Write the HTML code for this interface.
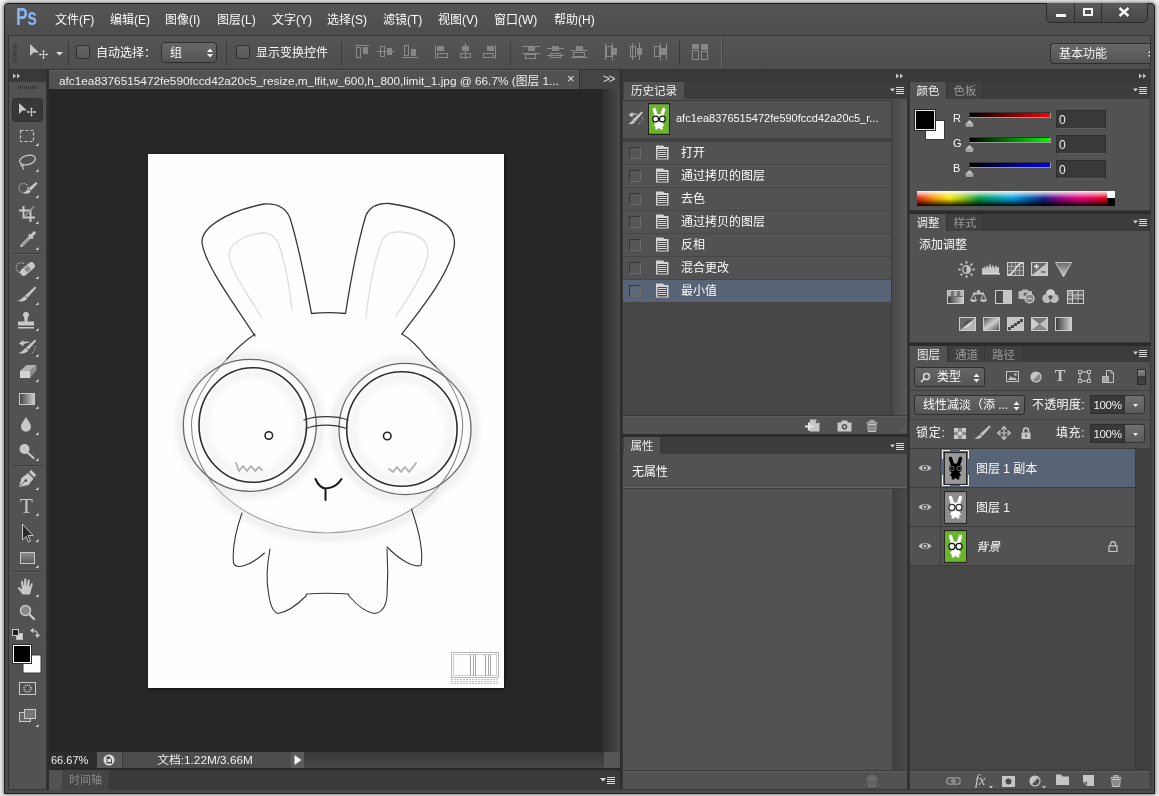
<!DOCTYPE html>
<html lang="zh-CN"><head><meta charset="utf-8"><title>Photoshop</title>
<style>
*{box-sizing:border-box;margin:0;padding:0}
html,body{width:1159px;height:796px;overflow:hidden}
body{background:#f6f6f6;font-family:"Liberation Sans","Noto Sans CJK SC",sans-serif;font-size:12px;color:#f0f0f0;position:relative}
.abs{position:absolute}
#win{position:absolute;left:4px;top:3px;width:1151px;height:791px;box-shadow:0 0 4px 1px rgba(0,0,0,.5);background:#4a4a4a;border:1px solid #1e1e1e;border-radius:4px 4px 0 0}
#app{position:absolute;left:0;top:0;width:1159px;height:796px;will-change:transform;opacity:.999}
#menubar{position:absolute;left:5px;top:4px;width:1149px;height:31px;background:linear-gradient(#565656,#4e4e4e);border-radius:4px 4px 0 0}
.menu{position:absolute;top:11px;font-size:12px;color:#fbfbfb;white-space:nowrap;line-height:16px}
#optbar{overflow:hidden;position:absolute;left:8px;top:35px;width:1143px;height:35px;background:linear-gradient(#565656,#4f4f4f);border:1px solid #343434;border-top-color:#3a3a3a}
.t12{font-size:12px;line-height:16px;white-space:nowrap;color:#fbfbfb}
#tools{position:absolute;left:8px;top:70px;width:39px;height:720px;background:#535353;border:1px solid #343434;border-top:none}
.darkhead{background:#3a3a3a}
#doc{position:absolute;left:49px;top:70px;width:571px;height:720px;overflow:hidden;background:#282828}
#tabbar{position:absolute;left:0;top:0;width:571px;height:19px;background:#454545}
#tab{position:absolute;left:0;top:0;width:531px;height:19px;box-shadow:inset 0 1px 0 #636363;background:#535353;border-right:1px solid #333}
#mid{position:absolute;left:622px;top:70px;width:286px;height:720px;overflow:hidden;background:#535353}
#right{position:absolute;left:909px;top:70px;width:242px;height:720px;overflow:hidden;background:#535353}
.ptabs{position:absolute;left:0;width:100%;height:17px;background:#3d3d3d}
.ptab{position:absolute;top:0;height:17px;background:#535353;color:#f0f0f0;font-size:11.5px;line-height:19px !important;text-align:center;overflow:hidden;white-space:nowrap}
.ptab.off{background:#414141;color:#9a9a9a}
</style></head><body>
<div id="win"></div>
<div id="app">
<div class="abs" style="left:8px;top:69px;width:1143px;height:721px;background:#2e2e2e"></div><div class="abs" style="left:622px;top:70px;width:529px;height:12px;background:#3a3a3a"></div>
<div id="menubar">
<div class="abs" id="pslogo" style="left:11px;top:3px;font-size:23px;font-weight:bold;color:#8fb5e6;line-height:26px;letter-spacing:-0.5px;transform:scaleX(.76);transform-origin:0 0;top:0px;text-shadow:0 0 1px #2d5c9e">Ps</div>
<div class="menu" style="left:50px;top:8px">文件(F)</div>
<div class="menu" style="left:105px;top:8px">编辑(E)</div>
<div class="menu" style="left:160px;top:8px">图像(I)</div>
<div class="menu" style="left:212px;top:8px">图层(L)</div>
<div class="menu" style="left:267px;top:8px">文字(Y)</div>
<div class="menu" style="left:322px;top:8px">选择(S)</div>
<div class="menu" style="left:378px;top:8px">滤镜(T)</div>
<div class="menu" style="left:433px;top:8px">视图(V)</div>
<div class="menu" style="left:489px;top:8px">窗口(W)</div>
<div class="menu" style="left:549px;top:8px">帮助(H)</div>
<div class="abs" id="winbtns" style="left:1041px;top:-1px;width:102px;height:20px;background:linear-gradient(#5a5a5a,#484848);border:1px solid #2c2c2c;border-top:none;border-radius:0 0 5px 5px">
<div class="abs" style="left:27px;top:0;width:1px;height:19px;background:#2e2e2e"></div>
<div class="abs" style="left:54px;top:0;width:1px;height:19px;background:#2e2e2e"></div>
<div class="abs" style="left:9px;top:11px;width:10px;height:3px;background:#f4f4f4"></div>
<div class="abs" style="left:36px;top:5px;width:10px;height:8px;border:2px solid #f4f4f4"></div>
<svg class="abs" style="left:71px;top:4px" width="12" height="10" viewBox="0 0 12 10"><path d="M1.5 1 L10.5 9 M10.5 1 L1.5 9" stroke="#f4f4f4" stroke-width="2.4" fill="none"/></svg>
</div>
</div>
<div id="optbar"><div class="abs" style="left:0;top:1px;width:1142px;height:31px">
<svg class="abs" style="left:0px;top:0px" width="1142" height="31" viewBox="0 0 1142 31"><rect x="4" y="6" width="4" height="1" fill="#3c3c3c"/><rect x="4" y="8" width="4" height="1" fill="#3c3c3c"/><rect x="4" y="10" width="4" height="1" fill="#3c3c3c"/><rect x="4" y="12" width="4" height="1" fill="#3c3c3c"/><rect x="4" y="14" width="4" height="1" fill="#3c3c3c"/><rect x="4" y="16" width="4" height="1" fill="#3c3c3c"/><rect x="4" y="18" width="4" height="1" fill="#3c3c3c"/><rect x="4" y="20" width="4" height="1" fill="#3c3c3c"/><rect x="4" y="22" width="4" height="1" fill="#3c3c3c"/><rect x="4" y="24" width="4" height="1" fill="#3c3c3c"/><path d="M21 7 L21 19 L24.5 15.5 L30 15.5 Z" fill="#c8c8c8"/><path d="M34.5 13.500 v8 M30.500 17.500 h8" stroke="#c8c8c8" stroke-width="1" fill="none"/><path d="M33 14.700 l1.500 -2 l1.500 2 Z M33 20.300 l1.500 2 l1.500 -2 Z M31.700 16 l-2 1.500 l2 1.500 Z M37.300 16 l2 1.500 l-2 1.500 Z" fill="#c8c8c8"/><path d="M47 15 h7 l-3.5 3.5 Z" fill="#e0e0e0"/><rect x="59" y="4" width="1" height="24" fill="#3c3c3c"/><rect x="217" y="4" width="1" height="24" fill="#3c3c3c"/><rect x="332" y="4" width="1" height="24" fill="#3c3c3c"/><rect x="501" y="4" width="1" height="24" fill="#3c3c3c"/><rect x="670" y="4" width="1" height="24" fill="#3c3c3c"/><rect x="712" y="0" width="1" height="31" fill="#6a6a6a"/><rect x="713" y="0" width="1" height="31" fill="#444"/><rect x="346" y="8" width="14" height="1" fill="#8c8c8c"/><rect x="347.5" y="10.5" width="4" height="10" fill="none" stroke="#8c8c8c"/><rect x="354" y="10" width="5" height="7" fill="#878787"/><rect x="368" y="14" width="17" height="1" fill="#8c8c8c"/><rect x="371.5" y="9.5" width="4" height="10" fill="none" stroke="#8c8c8c"/><rect x="378" y="11" width="5" height="7" fill="#878787"/><rect x="393" y="20" width="16" height="1" fill="#8c8c8c"/><rect x="395.5" y="8.5" width="4" height="10" fill="none" stroke="#8c8c8c"/><rect x="402" y="12" width="5" height="7" fill="#878787"/><rect x="426" y="8" width="1" height="14" fill="#8c8c8c"/><rect x="428" y="9" width="7" height="5" fill="#878787"/><rect x="428.5" y="16.5" width="10" height="4" fill="none" stroke="#8c8c8c"/><rect x="456" y="6" width="1" height="16" fill="#8c8c8c"/><rect x="453" y="9" width="7" height="5" fill="#878787"/><rect x="451.5" y="16.5" width="10" height="4" fill="none" stroke="#8c8c8c"/><rect x="486" y="8" width="1" height="14" fill="#8c8c8c"/><rect x="478" y="9" width="7" height="5" fill="#878787"/><rect x="474.5" y="16.5" width="10" height="4" fill="none" stroke="#8c8c8c"/><rect x="513" y="9" width="18" height="1" fill="#8c8c8c"/><rect x="519" y="10" width="7" height="4" fill="#878787"/><rect x="513" y="16" width="18" height="1" fill="#8c8c8c"/><rect x="516.5" y="17.5" width="10" height="4" fill="none" stroke="#8c8c8c"/><rect x="538" y="11" width="17" height="1" fill="#8c8c8c"/><rect x="543" y="9" width="7" height="5" fill="#878787"/><rect x="538" y="18" width="17" height="1" fill="#8c8c8c"/><rect x="541.5" y="16.5" width="10" height="4" fill="none" stroke="#8c8c8c"/><rect x="567" y="9" width="7" height="4" fill="#878787"/><rect x="562" y="13" width="17" height="1" fill="#8c8c8c"/><rect x="564.5" y="15.5" width="11" height="4" fill="none" stroke="#8c8c8c"/><rect x="562" y="20" width="17" height="1" fill="#8c8c8c"/><rect x="596" y="6" width="1" height="17" fill="#8c8c8c"/><rect x="597.5" y="9.5" width="5" height="10" fill="none" stroke="#8c8c8c"/><rect x="603" y="6" width="1" height="17" fill="#8c8c8c"/><rect x="604" y="11" width="4" height="7" fill="#878787"/><rect x="621.5" y="9.5" width="5" height="10" fill="none" stroke="#8c8c8c"/><rect x="623" y="6" width="1" height="17" fill="#8c8c8c"/><rect x="628" y="11" width="5" height="7" fill="#878787"/><rect x="630" y="6" width="1" height="17" fill="#8c8c8c"/><rect x="645.5" y="9.5" width="5" height="10" fill="none" stroke="#8c8c8c"/><rect x="651" y="6" width="1" height="17" fill="#8c8c8c"/><rect x="652" y="11" width="5" height="7" fill="#878787"/><rect x="657" y="6" width="1" height="17" fill="#8c8c8c"/><rect x="683" y="7" width="7" height="5" fill="#878787"/><rect x="683.5" y="13.5" width="6" height="9" fill="none" stroke="#8c8c8c"/><rect x="692" y="7" width="7" height="6" fill="#878787"/><rect x="692.5" y="14.5" width="6" height="8" fill="none" stroke="#8c8c8c"/></svg>
<div class="abs" style="left:67px;top:8px;width:14px;height:14px;border:1px solid #2f2f2f;border-radius:3px;background:linear-gradient(#656565,#5a5a5a)"></div>
<div class="abs" style="left:227px;top:8px;width:14px;height:14px;border:1px solid #2f2f2f;border-radius:3px;background:linear-gradient(#656565,#5a5a5a)"></div>
<div class="abs t12" style="left:87px;top:8px">自动选择：</div>
<div class="abs" style="left:152px;top:5px;width:56px;height:21px;border:1px solid #2f2f2f;border-radius:4px;background:linear-gradient(#696969,#555)"><div class="abs t12" style="left:8px;top:2px">组</div><svg class="abs" style="left:44px;top:5px" width="8" height="10" viewBox="0 0 8 10"><path d="M1 4 L4 0.5 L7 4 Z M1 6 L4 9.5 L7 6 Z" fill="#f0f0f0"/></svg></div>
<div class="abs t12" style="left:247px;top:8px">显示变换控件</div>
<div class="abs" style="left:1041px;top:6px;width:102px;height:21px;border:1px solid #2f2f2f;border-right:none;border-radius:4px 0 0 4px;background:linear-gradient(#696969,#555)"><div class="abs" style="left:8px;top:1px;font-size:12px;line-height:18px;color:#f4f4f4">基本功能</div><svg class="abs" style="left:96px;top:5px" width="8" height="10" viewBox="0 0 8 10"><path d="M1 4 L4 0.5 L7 4 Z M1 6 L4 9.5 L7 6 Z" fill="#f0f0f0"/></svg></div>
</div></div>
<div id="tools"><div class="abs darkhead" style="left:0;top:0;width:37px;height:12px"></div><!--TOOLS--><svg class="abs" style="left:0;top:0" width="37" height="721" viewBox="0 0 37 721"><path d="M4 3.5 l3.2 2.5 l-3.2 2.5 Z M8 3.5 l3.2 2.5 l-3.2 2.5 Z" fill="#c4c4c4"/><rect x="9" y="16" width="1" height="3" fill="#333"/><rect x="11" y="16" width="1" height="3" fill="#333"/><rect x="13" y="16" width="1" height="3" fill="#333"/><rect x="15" y="16" width="1" height="3" fill="#333"/><rect x="17" y="16" width="1" height="3" fill="#333"/><rect x="19" y="16" width="1" height="3" fill="#333"/><rect x="21" y="16" width="1" height="3" fill="#333"/><rect x="23" y="16" width="1" height="3" fill="#333"/><rect x="25" y="16" width="1" height="3" fill="#333"/><rect x="27" y="16" width="1" height="3" fill="#333"/><rect x="3.5" y="28.5" width="30" height="23" rx="3" fill="#383838" stroke="#303030"/><path d="M10 33 V44 L13.5 40.5 H18 Z" fill="#c9c9c9"/><path d="M22.5 38 v8 M18.5 42 h8" stroke="#c9c9c9" stroke-width="1" fill="none"/><path d="M21 39.2 l1.5 -2 l1.5 2 Z M21 44.8 l1.5 2 l1.5 -2 Z M19.7 40.5 l-2 1.5 l2 1.5 Z M25.299999999999997 40.5 l2 1.5 l-2 1.5 Z" fill="#c9c9c9"/><rect x="11.5" y="60.5" width="13" height="11" fill="none" stroke="#c9c9c9" stroke-width="1.2" stroke-dasharray="3 2"/><path d="M29.5 73 V76 H26.5 Z" fill="#d8d8d8"/><ellipse cx="18.5" cy="90" rx="8" ry="4.6" transform="rotate(-14 18.5 90)" fill="none" stroke="#c9c9c9" stroke-width="1.3"/><path d="M12.5 94 c-1.5 1 0 3 1.5 2 c1 -1 -0.5 -2 -1.5 -2 M13.5 96 l1 3.5" fill="none" stroke="#c9c9c9" stroke-width="1.1"/><path d="M29.5 99 V102 H26.5 Z" fill="#d8d8d8"/><circle cx="14.5" cy="118" r="4.5" fill="none" stroke="#c9c9c9" stroke-width="1.2" stroke-dasharray="1.2 1.4"/><path d="M27 112 l1.5 1.5 l-6.5 7 l-2.5 -2 Z" fill="#c9c9c9"/><path d="M19 119 l2.8 2.5 c-2 2.3 -5 2.8 -8 1.5 c2.5 -0.5 3.5 -2 5.2 -4 Z" fill="#c9c9c9"/><path d="M29.5 125 V128 H26.5 Z" fill="#d8d8d8"/><path d="M14.5 136 V147.5 H26 M10 140.5 H21.5 V152" fill="none" stroke="#c9c9c9" stroke-width="2"/><path d="M16 146 L25.5 136" stroke="#9a9a9a" stroke-width="1.2"/><path d="M29.5 151 V154 H26.5 Z" fill="#d8d8d8"/><path d="M24.5 161.5 c1.5 -1 3 0.8 2 2.2 l-3 3 l1 1 l-1.5 1.5 l-1 -1 l-7.5 7.5 l-2.5 1.5 l-1 -1 l1.5 -2.5 l7.5 -7.5 l-1 -1 l1.5 -1.5 l1 1 Z" fill="#c9c9c9"/><path d="M20 168.5 l-6.5 6.5" stroke="#555" stroke-width="1"/><path d="M29.5 177 V180 H26.5 Z" fill="#d8d8d8"/><rect x="3" y="183" width="31" height="1" fill="#3e3e3e"/><rect x="3" y="184" width="31" height="1" fill="#5e5e5e"/><path d="M15 193.5 a5 5 0 1 0 -4 9" fill="none" stroke="#c9c9c9" stroke-width="1.2" stroke-dasharray="1.2 1.4"/><rect x="10" y="195.5" width="17" height="7" rx="3.5" transform="rotate(-40 18.5 199)" fill="#c9c9c9"/><rect x="16" y="196.5" width="5" height="5" transform="rotate(-40 18.5 199)" fill="#8e8e8e"/><path d="M29.5 206 V209 H26.5 Z" fill="#d8d8d8"/><path d="M26 216.5 l1.3 1.2 l-8.8 10 l-2.5 -2 Z" fill="#c9c9c9"/><path d="M15.5 226 l2.8 2.5 c-2 3 -6 3.5 -10 2.5 c3 -0.8 4.5 -2.5 7.2 -5 Z" fill="#c9c9c9"/><path d="M29.5 232 V235 H26.5 Z" fill="#d8d8d8"/><path d="M15 247 a2.9 2.9 0 1 1 4 0 l-0.700 4.500 h6.700 v4 h-16 v-4 h6.700 Z" fill="#c9c9c9"/><rect x="9" y="257" width="16" height="1.500" fill="#c9c9c9"/><path d="M29.5 258 V261 H26.5 Z" fill="#d8d8d8"/><path d="M26 269.5 l1.3 1.2 l-7.8 9 l-2.5 -2 Z" fill="#c9c9c9"/><path d="M16.5 278 l2.8 2.5 c-2 3 -6 3.5 -10 2.5 c3 -0.8 4.5 -2.5 7.2 -5 Z" fill="#c9c9c9"/><path d="M10 273.5 l4.5 -3.5 v2 c3 -0.8 5.5 -0.5 7 0.5 c-2.5 0 -5 0.5 -7 1.8 v2 Z" fill="#c9c9c9"/><path d="M26 276 c0.5 3 -1 6 -4.5 8" fill="none" stroke="#c9c9c9" stroke-width="1" stroke-dasharray="1 1.3"/><path d="M29.5 284 V287 H26.5 Z" fill="#d8d8d8"/><path d="M17.5 295 h10 l-6.500 6 h-10 Z" fill="#b4b4b4"/><path d="M27.5 295 v5.500 l-6.500 7.500 v-7 Z" fill="#8f8f8f"/><rect x="11" y="301" width="10" height="7" fill="#d4d4d4"/><path d="M29.5 309 V312 H26.5 Z" fill="#d8d8d8"/><defs><linearGradient id="tg" x1="0" x2="1"><stop offset="0" stop-color="#444"/><stop offset="1" stop-color="#cfcfcf"/></linearGradient><linearGradient id="rg" y1="0" y2="1" x1="0" x2="0"><stop offset="0" stop-color="#8d8d8d"/><stop offset="1" stop-color="#5c5c5c"/></linearGradient></defs><rect x="10.5" y="323.5" width="15" height="11" fill="url(#tg)" stroke="#c9c9c9" stroke-width="1"/><path d="M29.5 336 V339 H26.5 Z" fill="#d8d8d8"/><path d="M17 347 c1.5 3 5 6.5 5 9.8 a5 5 0 0 1 -10 0 c0 -3.3 3.5 -6.800 5 -9.8 Z" fill="#c9c9c9"/><path d="M29.5 362 V365 H26.5 Z" fill="#d8d8d8"/><circle cx="15.5" cy="379" r="5" fill="#c9c9c9"/><path d="M18.5 382.5 l6 5.500" stroke="#c9c9c9" stroke-width="2.2" stroke-linecap="round"/><path d="M29.5 388 V391 H26.5 Z" fill="#d8d8d8"/><rect x="3" y="395" width="31" height="1" fill="#3e3e3e"/><rect x="3" y="396" width="31" height="1" fill="#5e5e5e"/><path d="M10 417 l2.500 -9 l6.500 -5 l5.500 5.500 l-5 6.500 Z" fill="#c9c9c9"/><path d="M20 402 l2.2 -2 l5 5 l-2 2.200 Z" fill="#c9c9c9"/><circle cx="16.8" cy="410.5" r="1.200" fill="#333"/><path d="M10.5 416.5 l5.500 -5.500" stroke="#555" stroke-width="0.8"/><path d="M29.5 417 V420 H26.5 Z" fill="#d8d8d8"/><text x="17.5" y="443" font-family="Liberation Serif,serif" font-size="21" fill="#c9c9c9" text-anchor="middle">T</text><path d="M29.5 443 V446 H26.5 Z" fill="#d8d8d8"/><path d="M13.5 454 V470 L17 466.5 L19.5 472 L21.5 471 L19 465.5 H24 Z" fill="#2a2a2a" stroke="#c9c9c9" stroke-width="1"/><path d="M29.5 469 V472 H26.5 Z" fill="#d8d8d8"/><rect x="11.5" y="482.5" width="14" height="11" fill="url(#rg)" stroke="#c9c9c9" stroke-width="1"/><path d="M29.5 495 V498 H26.5 Z" fill="#d8d8d8"/><rect x="3" y="501" width="31" height="1" fill="#3e3e3e"/><rect x="3" y="502" width="31" height="1" fill="#5e5e5e"/><path d="M13.5 524.5 c-1.500 -2.500 -3.500 -5 -5 -6.500 c0.800 -1.200 2.200 -0.800 3.500 0.800 l1 1 l-1 -8 c0.300 -1.300 1.800 -1.300 2 0 l1 5 l0.200 -7.500 c0.300 -1.300 1.900 -1.300 2.100 0 l0.200 7.500 l1.300 -6.500 c0.400 -1.200 1.900 -1 2 0.300 l-0.800 7.200 l2 -4 c0.700 -1 2 -0.500 1.700 0.700 c-1 3.500 -2 6.500 -2.700 10 Z" fill="#c9c9c9"/><path d="M29.5 524 V527 H26.5 Z" fill="#d8d8d8"/><circle cx="16.5" cy="540.5" r="5" fill="#8a8a8a" stroke="#c9c9c9" stroke-width="1.500"/><path d="M20.5 544.5 l4.500 4.500" stroke="#c9c9c9" stroke-width="2.400" stroke-linecap="round"/><rect x="7.5" y="563.5" width="6" height="6" fill="#d8d8d8" stroke="#bbb"/><rect x="3.5" y="559.5" width="6" height="6" fill="#222" stroke="#ccc"/><path d="M24 560.5 c3 0 4.500 1.500 4.500 4.500" fill="none" stroke="#c9c9c9" stroke-width="1.200"/><path d="M21 560.5 l3.500 -2.800 v5.600 Z M28.5 568 l-2.800 -3.500 h5.600 Z" fill="#c9c9c9"/><rect x="14" y="585" width="18" height="18" fill="#fff" stroke="#3a3a3a" stroke-width="1"/><rect x="3.5" y="574.5" width="19" height="19" fill="#000" stroke="#2c2c2c" stroke-width="1"/><rect x="4.5" y="575.5" width="17" height="17" fill="#000" stroke="#fff" stroke-width="1"/><rect x="10.5" y="612.5" width="16" height="12" fill="none" stroke="#c9c9c9" stroke-width="1"/><circle cx="18.5" cy="618.5" r="3.500" fill="none" stroke="#f0f0f0" stroke-width="1.200" stroke-dasharray="1.100 1.100"/><rect x="10.5" y="642.5" width="11" height="9" fill="#6a6a6a" stroke="#c9c9c9" stroke-width="1"/><rect x="15.5" y="639.5" width="11" height="9" fill="#777" stroke="#c9c9c9" stroke-width="1"/><path d="M29.5 654 V657 H26.5 Z" fill="#d8d8d8"/></svg><!--/TOOLS--></div>
<div id="doc"><div id="tabbar"><div id="tab"><div class="abs" id="tabtxt" style="left:10px;top:3px;font-size:11.8px;line-height:16px;color:#f0f0f0;white-space:nowrap">afc1ea8376515472fe590fccd42a20c5_resize,m_lfit,w_600,h_800,limit_1.jpg @ 66.7% (图层 1...</div><div class="abs" style="left:518px;top:1px;font-size:13px;line-height:16px;color:#e8e8e8">×</div></div>
<div class="abs" style="left:554px;top:1px;font-size:12px;line-height:16px;color:#dcdcdc;letter-spacing:-1.5px">&gt;&gt;</div></div>
<div class="abs" id="canvas" style="left:99px;top:84px;width:356px;height:534px;background:#fff;box-shadow:1px 1px 3px rgba(0,0,0,.5)"><!--RABBIT--><svg class="abs" style="left:0;top:0" width="356" height="534" viewBox="0 0 356 534"><defs><filter id="bl" x="-20%" y="-20%" width="140%" height="140%"><feGaussianBlur stdDeviation="3.500"/></filter></defs><g transform="translate(-148,-154)" fill="none" stroke="#d2d2d2" stroke-width="5" opacity=".55" filter="url(#bl)"><ellipse cx="249.800" cy="425.300" rx="70" ry="69"/><ellipse cx="405" cy="429" rx="70" ry="69"/><path d="M216 492 A135.500 107 0 0 0 438 492"/><ellipse cx="252.800" cy="425" rx="48" ry="51" stroke-width="3"/><ellipse cx="401.900" cy="429" rx="49" ry="51" stroke-width="3"/></g><g transform="translate(-148,-154)" fill="none" stroke-linecap="round" stroke-linejoin="round"><path d="M255 336 C235 305 205 265 202 243 C201 228 225 212 264 204 C278 203 286 208 290 218 C300 250 306 285 311.500 313.500 C322 312.500 335 312.500 345.500 313.500 C350 285 357 245 366 215 C371 205 380 203 389 203.500 C415 207 435 215 447 225 C455 233 456 242 453 252 C445 280 420 310 402 334" stroke="#3a3a3a" stroke-width="1.300"/><path d="M262 318 C245 290 230 270 229 255 C229 243 245 235 262 233 C272 232.500 277 238 280 248 C286 268 290 290 292 310" stroke="#dedede" stroke-width="1.300"/><path d="M366 318 C368 295 374 262 381 243 C385 233 392 231 402 232 C418 234 428 240 428 252 C427 270 410 295 396 316" stroke="#dedede" stroke-width="1.300"/><path d="M255 334 C245 341 235 350 226.500 359.500" stroke="#3a3a3a" stroke-width="1.200"/><path d="M402 334 C411 339 420 349 426 357 C430 361 433 364 436.500 367.500" stroke="#3a3a3a" stroke-width="1.200"/><path d="M226.500 359.500 C220 367 214 373 211 377 C198 395 191 410 191.500 426 C192 450 202 472 216.600 488" stroke="#8a8a8a" stroke-width="1.100"/><path d="M436.500 367.500 C441 372 444 375 446 378 C457 394 463 410 462.700 426 C462 450 452 472 437.400 488" stroke="#8a8a8a" stroke-width="1.100"/><path d="M216.600 488 A135.500 107 0 0 0 437.400 488" stroke="#a4a4a4" stroke-width="1.100"/><ellipse cx="249.800" cy="425.300" rx="66.500" ry="66" stroke="#6a6a6a" stroke-width="1.300"/><ellipse cx="405" cy="429" rx="66" ry="65.600" stroke="#6a6a6a" stroke-width="1.300"/><ellipse cx="252.800" cy="425" rx="53.800" ry="57.300" stroke="#2e2e2e" stroke-width="1.600"/><ellipse cx="401.900" cy="429" rx="55.200" ry="57.300" stroke="#2e2e2e" stroke-width="1.600"/><path d="M304 420 C316 415.500 336 415.500 348 420 M306 428.500 C318 424 334 424 346.500 428.500" stroke="#3a3a3a" stroke-width="1.300"/><circle cx="268.800" cy="435.500" r="3.800" stroke="#222" stroke-width="1.500"/><circle cx="387.300" cy="436" r="3.800" stroke="#222" stroke-width="1.500"/><path d="M236 463 l3 8 l4 -5 l4 5 l4 -5 l4 5 l4 -4 l3 3" stroke="#b4b4b4" stroke-width="2"/><path d="M389 469 l4 3 l4 -5 l4 5 l4 -5 l4 5 l4 -5 l3 -4" stroke="#b4b4b4" stroke-width="2"/><path d="M315.500 479 C318 485 322 488 325.500 488.500 C332 488 338 485 341.500 479 M325.500 488.500 V500" stroke="#1a1a1a" stroke-width="2"/><path d="M242 513 C236 530 232 548 233.500 563 C236 570 250 566 264.500 553" stroke="#3a3a3a" stroke-width="1.100"/><path d="M270 549 C267 565 266 580 268.500 593 C270 605 273 612 278 613.500 C288 612 298 604 306 596 L306.500 594 C320 593 335 593 348.500 594 L349 596 C356 604 365 612 374 613.500 C382 613 386 606 387 596 C388 580 388 565 387 549" stroke="#3a3a3a" stroke-width="1.100"/><path d="M387 547 C398 558 412 568 421 565.500 C424 550 418 528 411.500 509" stroke="#3a3a3a" stroke-width="1.100"/></g><g transform="translate(-148,-154)" fill="none" stroke="#b9b9b9" stroke-width="1"><rect x="451.500" y="652.500" width="47" height="25"/><rect x="453.500" y="654.500" width="43" height="21" stroke="#cfcfcf"/><path d="M470.500 655 V676 M473.500 655 V676 M475.500 655 V676 M485.500 655 V676 M488.500 655 V676 M490.500 655 V676" stroke="#a8a8a8"/><path d="M451 679.500 H499 M451 681.500 H499 M451 683.500 H499" stroke-dasharray="2 1" stroke="#c0c0c0"/></g></svg><!--/RABBIT--></div>
<div class="abs" id="vscroll" style="left:553px;top:19px;width:18px;height:663px;background:linear-gradient(90deg,#2e2e2e,#4a4a4a)"></div>
<div class="abs" id="status" style="left:0;top:682px;width:571px;height:16px;background:#535353">
<div class="abs" style="left:0;top:0;width:48px;height:16px;background:#2e2e2e;font-size:11px;line-height:16px;color:#f0f0f0;padding-left:2px">66.67%</div>
<div class="abs" style="left:48px;top:0;width:26px;height:16px;background:#5a5a5a;border-right:1px solid #3e3e3e"></div><svg class="abs" style="left:54px;top:2px" width="12" height="12" viewBox="0 0 12 12"><circle cx="6" cy="6" r="5.500" fill="#dcdcdc"/><path d="M3.500 2.500 h3 l1 1 v1.500 h1.500 v4.500 h-5.500 Z" fill="#4a4a4a"/><path d="M6 5 h2 v3 h-3.500 v-3 Z" fill="#dcdcdc"/></svg>
<div class="abs" style="left:74px;top:0;width:168px;height:16px;background:#4d4d4d;font-size:11.8px;line-height:16px;color:#f0f0f0;text-align:center;white-space:nowrap;padding-right:4px">文档:1.22M/3.66M</div>
<div class="abs" style="left:242px;top:0;width:13px;height:16px;background:#5d5d5d"></div>
<svg class="abs" style="left:245px;top:3px" width="8" height="10" viewBox="0 0 8 10"><path d="M0.500 0 V10 L7.500 5 Z" fill="#f4f4f4"/></svg>
<div class="abs" style="left:255px;top:0;width:300px;height:16px;background:linear-gradient(#3a3a3a,#484848)"></div>
<div class="abs" style="left:555px;top:0;width:16px;height:16px;background:#575757"></div>
</div>
<div class="abs" id="timeline" style="left:0;top:699px;width:571px;height:22px;background:#3b3b3b;border-top:1px solid #2a2a2a">
<div class="abs" style="left:0;top:0;width:13px;height:20px;background:#535353"></div>
<div class="abs" style="left:13px;top:0;width:48px;height:20px;background:#454545;border-right:1px solid #333;font-size:11px;line-height:20px;color:#8c8c8c;text-align:center">时间轴</div>
<svg class="abs" style="left:551px;top:6px" width="16" height="9" viewBox="0 0 16 9"><path d="M0 2 h6 l-3 3.500 Z" fill="#ddd"/><path d="M7 1.500 h8 M7 3.500 h8 M7 5.500 h8 M7 7.500 h8" stroke="#ddd" stroke-width="1"/></svg>
</div>
</div>
<!--MID--><div id="mid"><div class="abs darkhead" style="left:0;top:0;width:100%;height:12px"></div><svg class="abs" style="left:274px;top:3px" width="8" height="6" viewBox="0 0 8 6"><path d="M0 0.500 l3.200 2.500 l-3.200 2.500 Z M4 0.500 l3.200 2.500 l-3.200 2.500 Z" fill="#c4c4c4"/></svg><div class="abs" style="left:0;top:12px;width:286px;height:355px;background:#535353;border:1px solid #383838;border-bottom:none"></div><div class="ptabs" style="top:12px"><div class="ptab" style="left:2px;width:60px">历史记录</div><svg class="abs" style="left:268px;top:5px" width="14" height="8" viewBox="0 0 14 8"><path d="M0 1.500 h5 l-2.500 3 Z" fill="#d8d8d8"/><path d="M6 0.500 h8 M6 2.500 h8 M6 4.500 h8 M6 6.500 h8" stroke="#d8d8d8" stroke-width="1"/></svg></div><div class="abs" style="left:1px;top:30px;width:268px;height:316px;background:#474747;border-top:1px solid #3a3a3a"></div><div class="abs" style="left:269px;top:30px;width:16px;height:316px;background:linear-gradient(90deg,#4a4a4a,#595959);border-left:1px solid #3c3c3c"></div><div class="abs" style="left:1px;top:31px;width:268px;height:38px;background:#535353;border-bottom:1px solid #3a3a3a"></div><svg class="abs" style="left:6px;top:41px" width="16" height="14" viewBox="0 0 16 14"><path d="M13.500 0.500 l1.500 1.300 l-8 9 l-2.500 -2 Z" fill="#c8c8c8"/><path d="M4.500 9 l2.500 2.200 c-2 2 -4.500 2.500 -7 1.500 c2.500 -0.500 3 -2 4.500 -3.700 Z" fill="#c8c8c8"/><path d="M0.500 4 l4 -3 v1.800 c2.500 -0.600 4.500 -0.300 6 0.500 c-2 0 -4.500 0.500 -6 1.500 v1.800 Z" fill="#c8c8c8"/><path d="M14.500 6 c0.500 2.500 -0.500 5 -3.500 6.500" fill="none" stroke="#c8c8c8" stroke-width="1" stroke-dasharray="1 1.300"/></svg><div class="abs" style="left:26px;top:33px;width:22px;height:32px;border:1px solid #222"><svg class="abs" style="left:0px;top:0px" width="20" height="30" viewBox="0 0 22 32"><rect x="0" y="0" width="22" height="32" fill="#6cb52d"/><path d="M8.200 13 L5.800 5.500 M13.800 13 L16.200 5.500" stroke="#fff" stroke-width="3.600" stroke-linecap="round" fill="none"/><ellipse cx="11" cy="16" rx="6.800" ry="5.200" fill="#fff"/><path d="M7 20 h8 l1.800 3.500 l-1.800 0.500 v3.500 h-2.600 l-0.400 -1.200 h-2 l-0.400 1.200 h-2.600 v-3.500 l-1.800 -0.500 Z" fill="#fff"/><circle cx="7.300" cy="16" r="3.200" fill="#fff" stroke="#111" stroke-width="1.300"/><circle cx="14.700" cy="16" r="3.200" fill="#fff" stroke="#111" stroke-width="1.300"/></svg></div><div class="abs t12" id="snaptxt" style="left:54px;top:40px;font-size:11px">afc1ea8376515472fe590fccd42a20c5_r...</div><div class="abs" style="left:1px;top:70px;width:268px;height:1px;background:#3a3a3a"></div><div class="abs" style="left:1px;top:72px;width:268px;height:22px;background:#535353"></div><div class="abs" style="left:7px;top:77px;width:12px;height:12px;border:1px solid;border-color:#383838 #6c6c6c #6c6c6c #383838;background:#575757"></div><svg class="abs" style="left:33px;top:75px" width="15" height="15" viewBox="0 0 15 15"><path d="M1 0.500 h7 l1.500 1.500 h4 v12.500 h-12.500 Z" fill="#d6d6d6"/><path d="M2.500 4 h9.500 v9.500 h-9.500 Z" fill="#4a4a4a"/><path d="M3 5.500 h8.500 M3 7.500 h8.500 M3 9.500 h8.500 M3 11.500 h8.500" stroke="#d6d6d6" stroke-width="1"/></svg><div class="abs t12" style="left:59px;top:75px">打开</div><div class="abs" style="left:1px;top:95px;width:268px;height:22px;background:#535353"></div><div class="abs" style="left:7px;top:100px;width:12px;height:12px;border:1px solid;border-color:#383838 #6c6c6c #6c6c6c #383838;background:#575757"></div><svg class="abs" style="left:33px;top:98px" width="15" height="15" viewBox="0 0 15 15"><path d="M1 0.500 h7 l1.500 1.500 h4 v12.500 h-12.500 Z" fill="#d6d6d6"/><path d="M2.500 4 h9.500 v9.500 h-9.500 Z" fill="#4a4a4a"/><path d="M3 5.500 h8.500 M3 7.500 h8.500 M3 9.500 h8.500 M3 11.500 h8.500" stroke="#d6d6d6" stroke-width="1"/></svg><div class="abs t12" style="left:59px;top:98px">通过拷贝的图层</div><div class="abs" style="left:1px;top:118px;width:268px;height:22px;background:#535353"></div><div class="abs" style="left:7px;top:123px;width:12px;height:12px;border:1px solid;border-color:#383838 #6c6c6c #6c6c6c #383838;background:#575757"></div><svg class="abs" style="left:33px;top:121px" width="15" height="15" viewBox="0 0 15 15"><path d="M1 0.500 h7 l1.500 1.500 h4 v12.500 h-12.500 Z" fill="#d6d6d6"/><path d="M2.500 4 h9.500 v9.500 h-9.500 Z" fill="#4a4a4a"/><path d="M3 5.500 h8.500 M3 7.500 h8.500 M3 9.500 h8.500 M3 11.500 h8.500" stroke="#d6d6d6" stroke-width="1"/></svg><div class="abs t12" style="left:59px;top:121px">去色</div><div class="abs" style="left:1px;top:141px;width:268px;height:22px;background:#535353"></div><div class="abs" style="left:7px;top:146px;width:12px;height:12px;border:1px solid;border-color:#383838 #6c6c6c #6c6c6c #383838;background:#575757"></div><svg class="abs" style="left:33px;top:144px" width="15" height="15" viewBox="0 0 15 15"><path d="M1 0.500 h7 l1.500 1.500 h4 v12.500 h-12.500 Z" fill="#d6d6d6"/><path d="M2.500 4 h9.500 v9.500 h-9.500 Z" fill="#4a4a4a"/><path d="M3 5.500 h8.500 M3 7.500 h8.500 M3 9.500 h8.500 M3 11.500 h8.500" stroke="#d6d6d6" stroke-width="1"/></svg><div class="abs t12" style="left:59px;top:144px">通过拷贝的图层</div><div class="abs" style="left:1px;top:164px;width:268px;height:22px;background:#535353"></div><div class="abs" style="left:7px;top:169px;width:12px;height:12px;border:1px solid;border-color:#383838 #6c6c6c #6c6c6c #383838;background:#575757"></div><svg class="abs" style="left:33px;top:167px" width="15" height="15" viewBox="0 0 15 15"><path d="M1 0.500 h7 l1.500 1.500 h4 v12.500 h-12.500 Z" fill="#d6d6d6"/><path d="M2.500 4 h9.500 v9.500 h-9.500 Z" fill="#4a4a4a"/><path d="M3 5.500 h8.500 M3 7.500 h8.500 M3 9.500 h8.500 M3 11.500 h8.500" stroke="#d6d6d6" stroke-width="1"/></svg><div class="abs t12" style="left:59px;top:167px">反相</div><div class="abs" style="left:1px;top:187px;width:268px;height:22px;background:#535353"></div><div class="abs" style="left:7px;top:192px;width:12px;height:12px;border:1px solid;border-color:#383838 #6c6c6c #6c6c6c #383838;background:#575757"></div><svg class="abs" style="left:33px;top:190px" width="15" height="15" viewBox="0 0 15 15"><path d="M1 0.500 h7 l1.500 1.500 h4 v12.500 h-12.500 Z" fill="#d6d6d6"/><path d="M2.500 4 h9.500 v9.500 h-9.500 Z" fill="#4a4a4a"/><path d="M3 5.500 h8.500 M3 7.500 h8.500 M3 9.500 h8.500 M3 11.500 h8.500" stroke="#d6d6d6" stroke-width="1"/></svg><div class="abs t12" style="left:59px;top:190px">混合更改</div><div class="abs" style="left:1px;top:210px;width:268px;height:22px;background:#596577"></div><div class="abs" style="left:7px;top:215px;width:12px;height:12px;border:1px solid;border-color:#383838 #6c6c6c #6c6c6c #383838;background:#5e6a7c"></div><svg class="abs" style="left:33px;top:213px" width="15" height="15" viewBox="0 0 15 15"><path d="M1 0.500 h7 l1.500 1.500 h4 v12.500 h-12.500 Z" fill="#d6d6d6"/><path d="M2.500 4 h9.500 v9.500 h-9.500 Z" fill="#4a4a4a"/><path d="M3 5.500 h8.500 M3 7.500 h8.500 M3 9.500 h8.500 M3 11.500 h8.500" stroke="#d6d6d6" stroke-width="1"/></svg><div class="abs t12" style="left:59px;top:213px">最小值</div><div class="abs" style="left:1px;top:345px;width:284px;height:19px;background:#535353;border-top:1px solid #3a3a3a;box-shadow:inset 0 1px 0 #5e5e5e"></div><svg class="abs" style="left:183px;top:349px" width="15" height="13" viewBox="0 0 15 13"><path d="M5 0.500 h6 l3.500 3.500 v8.500 h-9.500 Z" fill="#c8c8c8"/><path d="M10.500 0.500 v4 h4" fill="#535353" stroke="#c8c8c8" stroke-width="0.800"/><path d="M0 7.500 h8 M4 3.500 v8" stroke="#e6e6e6" stroke-width="2.200"/></svg><svg class="abs" style="left:215px;top:350px" width="15" height="12" viewBox="0 0 15 12"><path d="M0.500 2.500 h3.500 l1 -2 h5 l1 2 h3.500 v9 h-14 Z" fill="#c8c8c8"/><circle cx="7.500" cy="6.800" r="2.800" fill="#535353"/><circle cx="7.500" cy="6.800" r="1.300" fill="#c8c8c8"/></svg><svg class="abs" style="left:244px;top:350px" width="12" height="12" viewBox="0 0 12 12"><path d="M0.500 2.800 h11 M4 2.300 v-1.500 h4 v1.500" stroke="#c8c8c8" stroke-width="1.200" fill="none"/><path d="M1.800 4.500 h8.400 l-0.600 7 h-7.200 Z" fill="none" stroke="#c8c8c8" stroke-width="1"/><path d="M4 5 v6 M6 5 v6 M8 5 v6" stroke="#c8c8c8" stroke-width="1"/></svg><svg class="abs" style="left:275px;top:354px" width="9" height="9" viewBox="0 0 9 9"><path d="M8 1 v1 M6 3 v1 M8 3 v1 M4 5 v1 M6 5 v1 M8 5 v1 M2 7 v1 M4 7 v1 M6 7 v1 M8 7 v1" stroke="#6e6e6e" stroke-width="1"/></svg><div class="abs" style="left:0;top:364px;width:286px;height:3px;background:#2c2c2c"></div><div class="abs" style="left:0;top:367px;width:286px;height:353px;background:#535353;border:1px solid #383838"></div><div class="ptabs" style="top:367px"><div class="ptab" style="left:2px;width:36px">属性</div><svg class="abs" style="left:268px;top:6px" width="14" height="8" viewBox="0 0 14 8"><path d="M0 1.500 h5 l-2.500 3 Z" fill="#d8d8d8"/><path d="M6 0.500 h8 M6 2.500 h8 M6 4.500 h8 M6 6.500 h8" stroke="#d8d8d8" stroke-width="1"/></svg></div><div class="abs t12" style="left:10px;top:394px">无属性</div><div class="abs" style="left:1px;top:417px;width:284px;height:1px;background:#6a6a6a"></div><div class="abs" style="left:1px;top:418px;width:284px;height:1px;background:#404040"></div><div class="abs" style="left:270px;top:419px;width:15px;height:281px;background:linear-gradient(90deg,#3f3f3f,#4b4b4b)"></div><div class="abs" style="left:1px;top:700px;width:284px;height:1px;background:#3a3a3a"></div><div class="abs" style="left:1px;top:701px;width:284px;height:1px;background:#616161"></div><svg class="abs" style="left:244px;top:705px" width="12" height="12" viewBox="0 0 12 12"><path d="M0.500 2.800 h11 M4 2.300 v-1.500 h4 v1.500" stroke="#777" stroke-width="1.200" fill="none"/><path d="M1.800 4.500 h8.400 l-0.600 7 h-7.200 Z" fill="none" stroke="#777" stroke-width="1"/><path d="M4 5 v6 M6 5 v6 M8 5 v6" stroke="#777" stroke-width="1"/></svg></div>
<!--/MID--><!--RIGHT--><div id="right"><div class="abs darkhead" style="left:0;top:0;width:100%;height:12px"></div><svg class="abs" style="left:230px;top:3px" width="8" height="6" viewBox="0 0 8 6"><path d="M0 0.500 l3.200 2.500 l-3.200 2.500 Z M4 0.500 l3.200 2.500 l-3.200 2.500 Z" fill="#c4c4c4"/></svg><div class="abs" style="left:0;top:12px;width:242px;height:129px;background:#535353;border:1px solid #383838"></div><div class="ptabs" style="top:12px"><div class="ptab" style="left:1px;width:36px">颜色</div><div class="ptab off" style="left:38px;width:36px;border-left:1px solid #383838;border-right:1px solid #383838">色板</div><svg class="abs" style="left:224px;top:5px" width="14" height="8" viewBox="0 0 14 8"><path d="M0 1.500 h5 l-2.500 3 Z" fill="#d8d8d8"/><path d="M6 0.500 h8 M6 2.500 h8 M6 4.500 h8 M6 6.500 h8" stroke="#d8d8d8" stroke-width="1"/></svg></div><div class="abs" style="left:16px;top:50px;width:20px;height:20px;background:#fff;border:1px solid #3a3a3a"></div><div class="abs" style="left:5px;top:39px;width:22px;height:22px;background:#000;border:1px solid #2a2a2a;box-shadow:inset 0 0 0 1px #e8e8e8, inset 0 0 0 2px #000"></div><div class="abs t12" style="left:44px;top:40px;font-size:11px">R</div><div class="abs" style="left:60px;top:42px;width:82px;height:6px;background:linear-gradient(90deg,#000,#ff0000);border:1px solid #999;border-top-color:#333;border-left-color:#333"></div><svg class="abs" style="left:55px;top:49px" width="11" height="9" viewBox="0 0 11 9"><path d="M5.500 0.300 L10 4.500 V6.500 a2 2 0 0 1 -2 2 H3 a2 2 0 0 1 -2 -2 V4.500 Z" fill="#a4a4a4" stroke="#3a3a3a" stroke-width="0.700"/><path d="M5.500 1.500 L8.500 4.500 H2.500 Z" fill="#c8c8c8"/></svg><div class="abs" style="left:147px;top:40px;width:50px;height:19px;background:#3a3a3a;border:1px solid #2e2e2e;border-bottom-color:#606060;font-size:12px;line-height:18px;padding-left:2px;color:#f0f0f0">0</div><div class="abs t12" style="left:44px;top:65px;font-size:11px">G</div><div class="abs" style="left:60px;top:67px;width:82px;height:6px;background:linear-gradient(90deg,#000,#00ff00);border:1px solid #999;border-top-color:#333;border-left-color:#333"></div><svg class="abs" style="left:55px;top:74px" width="11" height="9" viewBox="0 0 11 9"><path d="M5.500 0.300 L10 4.500 V6.500 a2 2 0 0 1 -2 2 H3 a2 2 0 0 1 -2 -2 V4.500 Z" fill="#a4a4a4" stroke="#3a3a3a" stroke-width="0.700"/><path d="M5.500 1.500 L8.500 4.500 H2.500 Z" fill="#c8c8c8"/></svg><div class="abs" style="left:147px;top:65px;width:50px;height:19px;background:#3a3a3a;border:1px solid #2e2e2e;border-bottom-color:#606060;font-size:12px;line-height:18px;padding-left:2px;color:#f0f0f0">0</div><div class="abs t12" style="left:44px;top:90px;font-size:11px">B</div><div class="abs" style="left:60px;top:92px;width:82px;height:6px;background:linear-gradient(90deg,#000,#0000ff);border:1px solid #999;border-top-color:#333;border-left-color:#333"></div><svg class="abs" style="left:55px;top:99px" width="11" height="9" viewBox="0 0 11 9"><path d="M5.500 0.300 L10 4.500 V6.500 a2 2 0 0 1 -2 2 H3 a2 2 0 0 1 -2 -2 V4.500 Z" fill="#a4a4a4" stroke="#3a3a3a" stroke-width="0.700"/><path d="M5.500 1.500 L8.500 4.500 H2.500 Z" fill="#c8c8c8"/></svg><div class="abs" style="left:147px;top:90px;width:50px;height:19px;background:#3a3a3a;border:1px solid #2e2e2e;border-bottom-color:#606060;font-size:12px;line-height:18px;padding-left:2px;color:#f0f0f0">0</div><div class="abs" style="left:8px;top:121px;width:190px;height:15px;background:linear-gradient(rgba(255,255,255,.95),rgba(255,255,255,0) 48%,rgba(0,0,0,0) 52%,rgba(0,0,0,.95)),linear-gradient(90deg,#e6211a,#f39a00 9%,#f8e800 17%,#8fc31f 25%,#009944 33%,#009e96 41%,#00a0e0 50%,#0068b7 58%,#1d2088 67%,#920783 75%,#e4007f 85%,#e5004f 93%,#e60012)"></div><div class="abs" style="left:198px;top:121px;width:8px;height:7px;background:#fff"></div><div class="abs" style="left:198px;top:128px;width:8px;height:8px;background:#000"></div><div class="abs" style="left:0;top:141px;width:242px;height:3px;background:#2c2c2c"></div><div class="abs" style="left:0;top:144px;width:242px;height:129px;background:#535353;border:1px solid #383838"></div><div class="ptabs" style="top:144px"><div class="ptab" style="left:1px;width:36px">调整</div><div class="ptab off" style="left:38px;width:36px;border-left:1px solid #383838;border-right:1px solid #383838">样式</div><svg class="abs" style="left:224px;top:5px" width="14" height="8" viewBox="0 0 14 8"><path d="M0 1.500 h5 l-2.500 3 Z" fill="#d8d8d8"/><path d="M6 0.500 h8 M6 2.500 h8 M6 4.500 h8 M6 6.500 h8" stroke="#d8d8d8" stroke-width="1"/></svg></div><div class="abs t12" style="left:10px;top:167px">添加调整</div><svg width="0" height="0" style="position:absolute"><defs><linearGradient id="gh" x1="0" x2="1"><stop offset="0" stop-color="#3c3c3c"/><stop offset="1" stop-color="#d0d0d0"/></linearGradient><linearGradient id="gd" x1="0" y1="0" x2="1" y2="1"><stop offset="0" stop-color="#555"/><stop offset=".5" stop-color="#cfcfcf"/><stop offset="1" stop-color="#555"/></linearGradient><linearGradient id="gv" x1="0" y1="0" x2="0" y2="1"><stop offset="0" stop-color="#6a6a6a"/><stop offset="1" stop-color="#d0d0d0"/></linearGradient></defs></svg><svg class="abs" style="left:49px;top:191px" width="17" height="17" viewBox="0 0 17 17" ><circle cx="8.500" cy="8.500" r="3.800" fill="none" stroke="#c6c6c6" stroke-width="1.300"/><path d="M8.500 4.700 a3.800 3.800 0 0 1 0 7.600 Z" fill="#c6c6c6"/><path d="M14.30 8.50 L16.80 8.50" stroke="#c6c6c6" stroke-width="1.800"/><path d="M12.60 12.60 L14.37 14.37" stroke="#c6c6c6" stroke-width="1.800"/><path d="M8.50 14.30 L8.50 16.80" stroke="#c6c6c6" stroke-width="1.800"/><path d="M4.40 12.60 L2.63 14.37" stroke="#c6c6c6" stroke-width="1.800"/><path d="M2.70 8.50 L0.20 8.50" stroke="#c6c6c6" stroke-width="1.800"/><path d="M4.40 4.40 L2.63 2.63" stroke="#c6c6c6" stroke-width="1.800"/><path d="M8.50 2.70 L8.50 0.20" stroke="#c6c6c6" stroke-width="1.800"/><path d="M12.60 4.40 L14.37 2.63" stroke="#c6c6c6" stroke-width="1.800"/></svg><svg class="abs" style="left:73px;top:193px" width="18" height="12" viewBox="0 0 18 12" ><path d="M0 11 V5 l1.500 0 l1 -2 l1 3 l1.500 -4 l1.500 3 l1.500 -5 l1.500 5 l1.500 -3.500 l1.500 4 l1.500 -3.500 l1.500 3 l1.500 -2 V11 Z" fill="#c6c6c6"/><rect x="0" y="10" width="18" height="1.500" fill="#e0e0e0"/></svg><svg class="abs" style="left:98px;top:192px" width="17" height="14" viewBox="0 0 17 14" ><rect x="0.500" y="0.500" width="16" height="13" fill="#6a6a6a"/><path d="M4.500 1 V13 M8.500 1 V13 M12.500 1 V13 M1 4.500 H16 M1 8.500 H16" stroke="#a0a0a0" stroke-width="1"/><path d="M1 13 C8 13 8 1 16 1" fill="none" stroke="#e8e8e8" stroke-width="1.400"/><rect x="0.500" y="0.500" width="16" height="13" fill="none" stroke="#cdcdcd"/></svg><svg class="abs" style="left:122px;top:192px" width="17" height="14" viewBox="0 0 17 14" ><rect x="0.500" y="0.500" width="16" height="13" fill="#6a6a6a"/><path d="M1 13 L16 1 V13 Z" fill="#c6c6c6"/><path d="M3 4.500 h5 M5.500 2 v5" stroke="#e8e8e8" stroke-width="1.300"/><path d="M10 10 h4.500" stroke="#555" stroke-width="1.300"/><rect x="0.500" y="0.500" width="16" height="13" fill="none" stroke="#cdcdcd"/></svg><svg class="abs" style="left:146px;top:192px" width="17" height="16" viewBox="0 0 17 16" ><path d="M0.500 0.500 H16.500 L8.500 15 Z" fill="url(#gv)" stroke="#c6c6c6" stroke-width="1"/></svg><svg class="abs" style="left:38px;top:220px" width="17" height="14" viewBox="0 0 17 14" ><rect x="0.500" y="0.500" width="16" height="13" fill="#6a6a6a"/><rect x="1" y="1" width="15" height="5" fill="#b0b0b0"/><rect x="4" y="1" width="3" height="5" fill="#777"/><rect x="10" y="1" width="3" height="5" fill="#777"/><rect x="1" y="7" width="15" height="6" fill="url(#gh)"/><rect x="0.500" y="0.500" width="16" height="13" fill="none" stroke="#cdcdcd"/></svg><svg class="abs" style="left:61px;top:220px" width="17" height="14" viewBox="0 0 17 14" ><path d="M8.500 0 v3 M3 3.500 h11" stroke="#c6c6c6" stroke-width="2"/><path d="M3.500 3.500 L0.800 10 h5.400 Z M13.500 3.500 L10.800 10 h5.400 Z" fill="none" stroke="#c6c6c6" stroke-width="1"/><path d="M0 10 h7 c-0.500 2.500 -6.500 2.500 -7 0 Z M10 10 h7 c-0.500 2.500 -6.500 2.500 -7 0 Z" fill="#c6c6c6"/><path d="M6.500 1 l2 3 l2 -3" fill="#c6c6c6"/></svg><svg class="abs" style="left:86px;top:220px" width="17" height="14" viewBox="0 0 17 14" ><rect x="0.500" y="0.500" width="16" height="13" fill="#6a6a6a"/><rect x="8" y="1" width="8" height="12" fill="#c6c6c6"/><rect x="1" y="1" width="7" height="12" fill="#4e4e4e"/><rect x="0.500" y="0.500" width="16" height="13" fill="none" stroke="#cdcdcd"/></svg><svg class="abs" style="left:109px;top:219px" width="18" height="15" viewBox="0 0 18 15" ><path d="M0.500 2 h3 l1 -1.500 h5 l1 1.500 h3.500 v8 h-13.500 Z" fill="#b8b8b8"/><circle cx="7.500" cy="5.500" r="2" fill="#6a6a6a"/><circle cx="11.500" cy="9.500" r="4.500" fill="#8a8a8a" stroke="#d8d8d8" stroke-width="1.200"/><path d="M9 9.500 h5" stroke="#ccc" stroke-width="1"/></svg><svg class="abs" style="left:133px;top:219px" width="17" height="15" viewBox="0 0 17 15" ><circle cx="8.500" cy="4.800" r="4.500" fill="#cfcfcf"/><circle cx="4.800" cy="9.500" r="4.500" fill="#bdbdbd"/><circle cx="12.200" cy="9.500" r="4.500" fill="#bdbdbd"/><path d="M8.500 6 l-2.500 1.500 l2.500 4 l2.500 -4 Z" fill="#555"/></svg><svg class="abs" style="left:158px;top:220px" width="17" height="14" viewBox="0 0 17 14" ><rect x="0.500" y="0.500" width="16" height="13" fill="#6a6a6a"/><rect x="1" y="1" width="15" height="12" fill="#6a6a6a"/><path d="M5.500 1 V13 M11 1 V13 M1 5 H16 M1 9 H16" stroke="#cdcdcd" stroke-width="1"/><rect x="1" y="1" width="4" height="3.500" fill="#999"/><rect x="6" y="5.500" width="4.500" height="3" fill="#888"/><rect x="11.500" y="9.500" width="4.500" height="3.500" fill="#4a4a4a"/><rect x="6" y="9.500" width="4.500" height="3.500" fill="#555"/><rect x="0.500" y="0.500" width="16" height="13" fill="none" stroke="#cdcdcd"/></svg><svg class="abs" style="left:50px;top:247px" width="17" height="14" viewBox="0 0 17 14" ><rect x="0.500" y="0.500" width="16" height="13" fill="#6a6a6a"/><path d="M1 13 L16 1 V13 Z" fill="#b5b5b5"/><ellipse cx="8.500" cy="7" rx="5" ry="2.800" transform="rotate(-38 8.500 7)" fill="#d5d5d5"/><path d="M4.300 10.300 a5 2.800 -38 0 1 8.400 -6.600 Z" fill="#4e4e4e"/><rect x="0.500" y="0.500" width="16" height="13" fill="none" stroke="#cdcdcd"/></svg><svg class="abs" style="left:74px;top:247px" width="17" height="14" viewBox="0 0 17 14" ><rect x="0.500" y="0.500" width="16" height="13" fill="#6a6a6a"/><rect x="1" y="1" width="15" height="12" fill="url(#gd)"/><rect x="0.500" y="0.500" width="16" height="13" fill="none" stroke="#cdcdcd"/></svg><svg class="abs" style="left:98px;top:247px" width="17" height="14" viewBox="0 0 17 14" ><rect x="0.500" y="0.500" width="16" height="13" fill="#6a6a6a"/><rect x="1" y="1" width="15" height="12" fill="#c6c6c6"/><path d="M1 10 h3 v-2 h3 v-2 h3 v-2 h3 v-2 h3 v3 h-3 v2 h-3 v2 h-3 v2 h-3 v2 h-3 Z" fill="#4a4a4a"/><rect x="0.500" y="0.500" width="16" height="13" fill="none" stroke="#cdcdcd"/></svg><svg class="abs" style="left:122px;top:247px" width="17" height="14" viewBox="0 0 17 14" ><rect x="0.500" y="0.500" width="16" height="13" fill="#6a6a6a"/><path d="M1 1 L8.500 7 L1 13 Z" fill="#d0d0d0"/><path d="M16 1 L8.500 7 L16 13 Z" fill="#c0c0c0"/><path d="M1 1 L8.500 7 L16 1 Z" fill="#7a7a7a"/><path d="M1 13 L8.500 7 L16 13 Z" fill="#8a8a8a"/><rect x="0.500" y="0.500" width="16" height="13" fill="none" stroke="#cdcdcd"/></svg><svg class="abs" style="left:146px;top:247px" width="17" height="14" viewBox="0 0 17 14" ><rect x="0.500" y="0.500" width="16" height="13" fill="#6a6a6a"/><rect x="1" y="1" width="15" height="12" fill="url(#gh)"/><rect x="0.500" y="0.500" width="16" height="13" fill="none" stroke="#cdcdcd"/></svg><div class="abs" style="left:0;top:273px;width:242px;height:3px;background:#2c2c2c"></div><div class="abs" style="left:0;top:276px;width:242px;height:444px;background:#535353;border:1px solid #383838"></div><div class="ptabs" style="top:276px;height:16px"><div class="ptab" style="left:1px;width:37px;height:16px;line-height:16px">图层</div><div class="ptab off" style="left:39px;width:37px;height:16px;line-height:16px;border-left:1px solid #383838;border-right:1px solid #383838">通道</div><div class="ptab off" style="left:76px;width:38px;height:16px;line-height:16px;border-right:1px solid #383838">路径</div><svg class="abs" style="left:224px;top:4px" width="14" height="8" viewBox="0 0 14 8"><path d="M0 1.500 h5 l-2.500 3 Z" fill="#d8d8d8"/><path d="M6 0.500 h8 M6 2.500 h8 M6 4.500 h8 M6 6.500 h8" stroke="#d8d8d8" stroke-width="1"/></svg></div><div class="abs" style="left:5px;top:297px;width:71px;height:20px;border:1px solid #2f2f2f;border-radius:3px;background:linear-gradient(#676767,#555)"><svg class="abs" style="left:5px;top:4px" width="11" height="11" viewBox="0 0 11 11"><circle cx="6.500" cy="4.500" r="3" fill="none" stroke="#e0e0e0" stroke-width="1.400"/><path d="M4.300 6.700 L1 10" stroke="#e0e0e0" stroke-width="1.600"/></svg><div class="abs t12" style="left:22px;top:1px">类型</div><svg class="abs" style="right:4px;top:5px" width="7" height="10" viewBox="0 0 7 10"><path d="M0.500 4 L3.500 0.500 L6.500 4 Z M0.500 6 L3.500 9.500 L6.500 6 Z" fill="#f0f0f0"/></svg></div><svg class="abs" style="left:97px;top:301px" width="13" height="11" viewBox="0 0 13 11" ><rect x="0.500" y="0.500" width="12" height="10" fill="none" stroke="#c6c6c6"/><path d="M2 9 l3 -4 l2 2.500 l1.500 -1.500 l2.500 3 Z" fill="#c6c6c6"/><circle cx="9.500" cy="3.500" r="1.200" fill="#c6c6c6"/></svg><svg class="abs" style="left:121px;top:301px" width="12" height="12" viewBox="0 0 12 12" ><circle cx="6" cy="6" r="5" fill="#8a8a8a" stroke="#c6c6c6" stroke-width="1.200"/><path d="M2.300 9.700 A5.200 5.200 0 0 1 9.700 2.300 Z" fill="#c6c6c6"/></svg><div class="abs" style="left:145px;top:297px;width:12px;font-family:'Liberation Serif',serif;font-size:16px;font-weight:bold;line-height:18px;color:#c6c6c6;text-align:center">T</div><svg class="abs" style="left:169px;top:300px" width="13" height="13" viewBox="0 0 13 13" ><rect x="2" y="2" width="9" height="9" fill="none" stroke="#c6c6c6" stroke-width="1.200"/><rect x="0.500" y="0.500" width="3" height="3" fill="#535353" stroke="#c6c6c6" stroke-width="0.900"/><rect x="9.500" y="0.500" width="3" height="3" fill="#535353" stroke="#c6c6c6" stroke-width="0.900"/><rect x="0.500" y="9.500" width="3" height="3" fill="#535353" stroke="#c6c6c6" stroke-width="0.900"/><rect x="9.500" y="9.500" width="3" height="3" fill="#535353" stroke="#c6c6c6" stroke-width="0.900"/></svg><svg class="abs" style="left:193px;top:300px" width="12" height="13" viewBox="0 0 12 13" ><path d="M4.500 0.500 h4.500 l2.500 2.500 v9.500 h-7 Z" fill="none" stroke="#c6c6c6" stroke-width="1"/><path d="M9 0.500 v2.500 h2.500" fill="none" stroke="#c6c6c6" stroke-width="0.900"/><rect x="0.500" y="6.500" width="6" height="6" fill="#a8a8a8" stroke="#c6c6c6" stroke-width="0.800"/></svg><div class="abs" style="left:228px;top:299px;width:9px;height:16px;border:1px solid #2c2c2c;border-radius:1px;background:linear-gradient(#8a8a8a 0,#6a6a6a 45%,#3c3c3c 46%,#444 100%)"></div><div class="abs" style="left:1px;top:320px;width:240px;height:1px;background:#424242"></div><div class="abs" style="left:5px;top:325px;width:111px;height:20px;border:1px solid #2f2f2f;border-radius:3px;background:linear-gradient(#676767,#555)"><div class="abs t12" style="left:8px;top:1px">线性减淡（添 ...</div><svg class="abs" style="right:4px;top:5px" width="7" height="10" viewBox="0 0 7 10"><path d="M0.500 4 L3.500 0.500 L6.500 4 Z M0.500 6 L3.500 9.500 L6.500 6 Z" fill="#f0f0f0"/></svg></div><div class="abs t12" style="left:123px;top:327px;letter-spacing:0.300px">不透明度:</div><div class="abs" style="left:181px;top:325px;width:35px;height:19px;background:#3a3a3a;border:1px solid #2e2e2e;font-size:11.5px;line-height:19px;color:#f0f0f0;text-align:center;letter-spacing:-0.300px;overflow:hidden">100%</div><div class="abs" style="left:216px;top:325px;width:20px;height:19px;background:linear-gradient(#727272,#5c5c5c);border:1px solid #353535;border-left:none;border-radius:0 3px 3px 0"><svg class="abs" style="left:8px;top:8px" width="5" height="3" viewBox="0 0 5 3"><path d="M0 0 h5 l-2.500 3 Z" fill="#f0f0f0"/></svg></div><div class="abs" style="left:1px;top:349px;width:240px;height:1px;background:#444"></div><div class="abs t12" style="left:7px;top:355px;letter-spacing:0.800px">锁定:</div><svg class="abs" style="left:45px;top:358px" width="12" height="11" viewBox="0 0 12 11" ><rect x="0" y="0" width="12" height="11" fill="#8e8e8e"/><rect x="0" y="0" width="4" height="3.700" fill="#d0d0d0"/><rect x="8" y="0" width="4" height="3.700" fill="#d0d0d0"/><rect x="4" y="3.700" width="4" height="3.700" fill="#d0d0d0"/><rect x="0" y="7.300" width="4" height="3.700" fill="#d0d0d0"/><rect x="8" y="7.300" width="4" height="3.700" fill="#d0d0d0"/></svg><svg class="abs" style="left:65px;top:355px" width="17" height="14" viewBox="0 0 17 14" ><path d="M15.500 0.500 l1.200 1.200 l-8.200 9.300 l-2.500 -2 Z" fill="#c6c6c6"/><path d="M5.500 9.500 l2.500 2.200 c-2 2 -5 2.500 -8 1.800 c2.500 -0.500 3.800 -2 5.500 -4 Z" fill="#c6c6c6"/></svg><svg class="abs" style="left:88px;top:356px" width="14" height="14" viewBox="0 0 14 14" ><path d="M7 1 v12 M1 7 h12" stroke="#c6c6c6" stroke-width="1.200"/><path d="M4.500 3.500 L7 0.500 L9.500 3.500 M4.500 10.500 L7 13.500 L9.500 10.500 M3.500 4.500 L0.500 7 L3.500 9.500 M10.500 4.500 L13.500 7 L10.500 9.500" fill="none" stroke="#c6c6c6" stroke-width="1.200"/></svg><svg class="abs" style="left:112px;top:357px" width="10" height="12" viewBox="0 0 10 12" ><path d="M2.500 5.500 v-2 a2.500 2.500 0 0 1 5 0 v2" fill="none" stroke="#c6c6c6" stroke-width="1.600"/><rect x="0.500" y="5.500" width="9" height="6.500" fill="#c6c6c6"/><rect x="4.300" y="7.500" width="1.400" height="2.500" fill="#555"/></svg><div class="abs t12" style="left:147px;top:355px;letter-spacing:0.500px">填充:</div><div class="abs" style="left:181px;top:354px;width:35px;height:19px;background:#3a3a3a;border:1px solid #2e2e2e;font-size:11.5px;line-height:19px;color:#f0f0f0;text-align:center;letter-spacing:-0.300px;overflow:hidden">100%</div><div class="abs" style="left:216px;top:354px;width:20px;height:19px;background:linear-gradient(#727272,#5c5c5c);border:1px solid #353535;border-left:none;border-radius:0 3px 3px 0"><svg class="abs" style="left:8px;top:8px" width="5" height="3" viewBox="0 0 5 3"><path d="M0 0 h5 l-2.500 3 Z" fill="#f0f0f0"/></svg></div><div class="abs" style="left:1px;top:378px;width:240px;height:322px;background:#474747;border-top:1px solid #3a3a3a"></div><div class="abs" style="left:226px;top:378px;width:15px;height:322px;background:linear-gradient(90deg,#3e3e3e,#444);border-left:1px solid #3a3a3a"></div><div class="abs" style="left:1px;top:379px;width:225px;height:39px;background:#535353;border-bottom:1px solid #3e3e3e"><div class="abs" style="left:30px;top:0;width:195px;height:38px;background:#596577;border-left:1px solid #3e3e3e"></div><svg class="abs" style="left:8px;top:14px" width="14" height="10" viewBox="0 0 13 10" preserveAspectRatio="none"><path d="M0.500 5 C3 1 10 1 12.500 5 C10 9 3 9 0.500 5 Z" fill="#c4c4c4"/><circle cx="6.500" cy="5" r="2.600" fill="#555"/><circle cx="6.500" cy="5" r="1.200" fill="#c4c4c4"/></svg><div class="abs" style="left:32px;top:1px;width:27px;height:36px;border:1px solid #f0f0f0"></div><div class="abs" style="left:40px;top:1px;width:10px;height:36px;background:#596577"></div><div class="abs" style="left:32px;top:10px;width:27px;height:16px;background:#596577"></div><div class="abs" style="left:34px;top:3px;width:23px;height:33px;border:1px solid #2a2a2a"><svg class="abs" style="left:0px;top:0px" width="21" height="31" viewBox="0 0 22 32"><rect x="0" y="0" width="22" height="32" fill="#9a9a9a"/><path d="M8.200 13 L5.800 5.500 M13.800 13 L16.200 5.500" stroke="#000" stroke-width="3.600" stroke-linecap="round" fill="none"/><ellipse cx="11" cy="16" rx="6.800" ry="5.200" fill="#000"/><path d="M7 20 h8 l1.800 3.500 l-1.800 0.500 v3.500 h-2.600 l-0.400 -1.200 h-2 l-0.400 1.200 h-2.600 v-3.500 l-1.800 -0.500 Z" fill="#000"/><circle cx="7.300" cy="16" r="2.200" fill="none" stroke="#9a9a9a" stroke-width="0.800"/><circle cx="14.700" cy="16" r="2.200" fill="none" stroke="#9a9a9a" stroke-width="0.800"/></svg></div><div class="abs t12" style="left:66px;top:12px;">图层 1 副本</div></div><div class="abs" style="left:1px;top:418px;width:225px;height:39px;background:#535353;border-bottom:1px solid #3e3e3e"><div class="abs" style="left:30px;top:0;width:195px;height:38px;background:#535353;border-left:1px solid #3e3e3e"></div><svg class="abs" style="left:8px;top:14px" width="14" height="10" viewBox="0 0 13 10" preserveAspectRatio="none"><path d="M0.500 5 C3 1 10 1 12.500 5 C10 9 3 9 0.500 5 Z" fill="#c4c4c4"/><circle cx="6.500" cy="5" r="2.600" fill="#555"/><circle cx="6.500" cy="5" r="1.200" fill="#c4c4c4"/></svg><div class="abs" style="left:34px;top:3px;width:23px;height:33px;border:1px solid #2a2a2a"><svg class="abs" style="left:0px;top:0px" width="21" height="31" viewBox="0 0 22 32"><rect x="0" y="0" width="22" height="32" fill="#8e8e8e"/><path d="M8.200 13 L5.800 5.500 M13.800 13 L16.200 5.500" stroke="#fff" stroke-width="3.600" stroke-linecap="round" fill="none"/><ellipse cx="11" cy="16" rx="6.800" ry="5.200" fill="#fff"/><path d="M7 20 h8 l1.800 3.500 l-1.800 0.500 v3.500 h-2.600 l-0.400 -1.200 h-2 l-0.400 1.200 h-2.600 v-3.500 l-1.800 -0.500 Z" fill="#fff"/><circle cx="7.300" cy="16" r="3.200" fill="#fff" stroke="#333" stroke-width="1.300"/><circle cx="14.700" cy="16" r="3.200" fill="#fff" stroke="#333" stroke-width="1.300"/></svg></div><div class="abs t12" style="left:66px;top:12px;">图层 1</div></div><div class="abs" style="left:1px;top:457px;width:225px;height:39px;background:#535353;border-bottom:1px solid #3e3e3e"><div class="abs" style="left:30px;top:0;width:195px;height:38px;background:#535353;border-left:1px solid #3e3e3e"></div><svg class="abs" style="left:8px;top:14px" width="14" height="10" viewBox="0 0 13 10" preserveAspectRatio="none"><path d="M0.500 5 C3 1 10 1 12.500 5 C10 9 3 9 0.500 5 Z" fill="#c4c4c4"/><circle cx="6.500" cy="5" r="2.600" fill="#555"/><circle cx="6.500" cy="5" r="1.200" fill="#c4c4c4"/></svg><div class="abs" style="left:34px;top:3px;width:23px;height:33px;border:1px solid #2a2a2a"><svg class="abs" style="left:0px;top:0px" width="21" height="31" viewBox="0 0 22 32"><rect x="0" y="0" width="22" height="32" fill="#6cb52d"/><path d="M8.200 13 L5.800 5.500 M13.800 13 L16.200 5.500" stroke="#fff" stroke-width="3.600" stroke-linecap="round" fill="none"/><ellipse cx="11" cy="16" rx="6.800" ry="5.200" fill="#fff"/><path d="M7 20 h8 l1.800 3.500 l-1.800 0.500 v3.500 h-2.600 l-0.400 -1.200 h-2 l-0.400 1.200 h-2.600 v-3.500 l-1.800 -0.500 Z" fill="#fff"/><circle cx="7.300" cy="16" r="3.200" fill="#fff" stroke="#111" stroke-width="1.300"/><circle cx="14.700" cy="16" r="3.200" fill="#fff" stroke="#111" stroke-width="1.300"/></svg></div><div class="abs t12" style="left:66px;top:12px;font-style:italic;">背景</div><svg class="abs" style="left:198px;top:14px" width="10" height="11" viewBox="0 0 10 11"><path d="M2.500 5 v-2 a2.500 2.500 0 0 1 5 0 v2" fill="none" stroke="#c8c8c8" stroke-width="1.300"/><rect x="1" y="5" width="8" height="5.500" fill="none" stroke="#c8c8c8" stroke-width="1.200"/></svg></div><div class="abs" style="left:1px;top:700px;width:240px;height:1px;background:#3a3a3a"></div><div class="abs" style="left:1px;top:701px;width:240px;height:1px;background:#616161"></div><svg class="abs" style="left:37px;top:707px" width="15" height="8" viewBox="0 0 15 8" ><rect x="0.800" y="0.800" width="8" height="6.400" rx="3.200" fill="none" stroke="#8e8e8e" stroke-width="1.500"/><rect x="6.200" y="0.800" width="8" height="6.400" rx="3.200" fill="none" stroke="#8e8e8e" stroke-width="1.500"/><path d="M4.500 4 h6" stroke="#8e8e8e" stroke-width="1.500"/></svg><div class="abs" style="left:66px;top:701px;font-family:'Liberation Serif',serif;font-style:italic;font-size:15px;line-height:18px;color:#c6c6c6;letter-spacing:-0.500px">fx</div><svg class="abs" style="left:80px;top:716px" width="4" height="3" viewBox="0 0 4 3" ><path d="M0 0 h4 l-2 2.500 Z" fill="#c6c6c6"/></svg><svg class="abs" style="left:93px;top:706px" width="13" height="11" viewBox="0 0 13 11" ><rect x="0" y="0" width="13" height="11" fill="#c6c6c6"/><circle cx="6.500" cy="5.500" r="3" fill="#4a4a4a"/></svg><svg class="abs" style="left:120px;top:705px" width="12" height="12" viewBox="0 0 12 12" ><circle cx="6" cy="6" r="5" fill="#555" stroke="#c6c6c6" stroke-width="1.200"/><path d="M2.300 9.700 A5.200 5.200 0 0 1 9.700 2.300 Z" fill="#c6c6c6"/></svg><svg class="abs" style="left:133px;top:716px" width="4" height="3" viewBox="0 0 4 3" ><path d="M0 0 h4 l-2 2.500 Z" fill="#c6c6c6"/></svg><svg class="abs" style="left:147px;top:704px" width="13" height="11" viewBox="0 0 13 11" ><path d="M0 0.500 h5 l1.500 2 h6.500 v8.500 h-13 Z" fill="#c6c6c6"/></svg><svg class="abs" style="left:174px;top:705px" width="11" height="11" viewBox="0 0 11 11" ><path d="M0 0 h11 v11 h-7 l-4 -4 Z" fill="#c6c6c6"/><path d="M0.500 6.500 h4 v4" fill="#535353" stroke="#c6c6c6" stroke-width="0.800"/></svg><svg class="abs" style="left:201px;top:705px" width="12" height="12" viewBox="0 0 12 12"><path d="M0.500 2.800 h11 M4 2.300 v-1.500 h4 v1.500" stroke="#c8c8c8" stroke-width="1.200" fill="none"/><path d="M1.800 4.500 h8.400 l-0.600 7 h-7.200 Z" fill="none" stroke="#c8c8c8" stroke-width="1"/><path d="M4 5 v6 M6 5 v6 M8 5 v6" stroke="#c8c8c8" stroke-width="1"/></svg></div>
<!--/RIGHT--></div>
</body></html>
